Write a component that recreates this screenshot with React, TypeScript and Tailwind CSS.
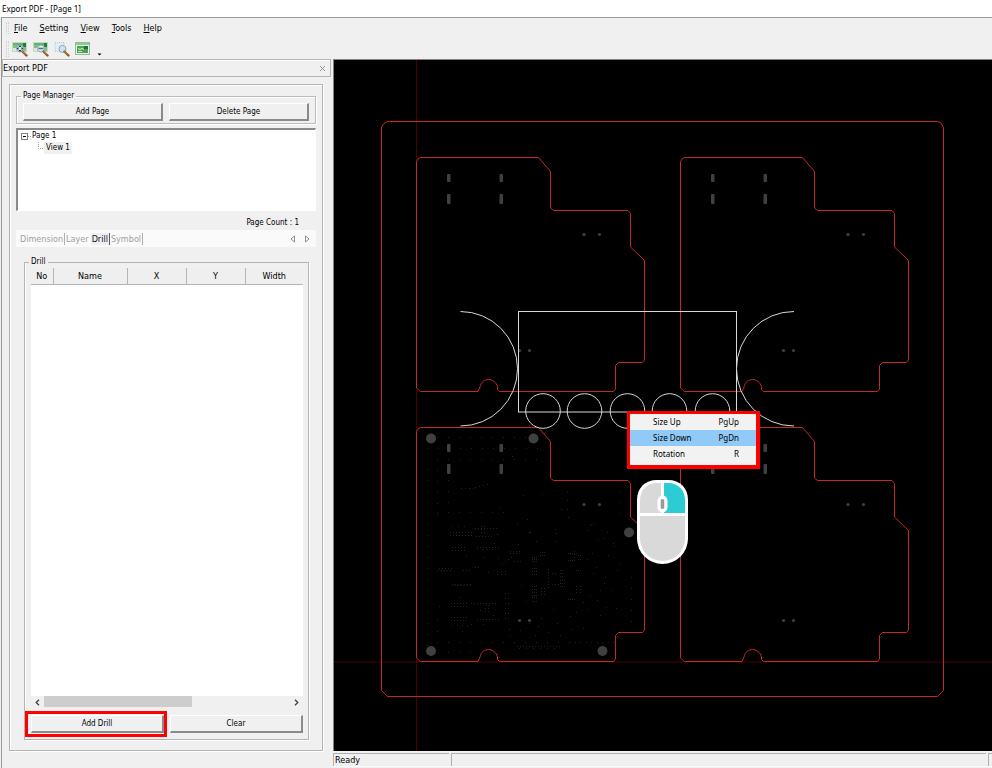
import { useState } from 'react';
import type { ReactNode } from 'react';
import clsx from 'clsx';

const MENUS = ['File', 'Setting', 'View', 'Tools', 'Help'];

const TABS = ['Dimension', 'Layer', 'Drill', 'Symbol'];

const COLUMNS = [
  { label: 'No', width: 'w-[22px]' },
  { label: 'Name', width: 'w-[74px]' },
  { label: 'X', width: 'w-[59px]' },
  { label: 'Y', width: 'w-[59px]' },
  { label: 'Width', width: 'w-[58px]' },
];

const CONTEXT_ITEMS = [
  { label: 'Size Up', shortcut: 'PgUp' },
  { label: 'Size Down', shortcut: 'PgDn', active: true },
  { label: 'Rotation', shortcut: 'R' },
];

/* Board copies, as offsets from the first one */
const BOARDS = [
  [0, 0],
  [264, 0],
  [0, 270],
  [264, 270],
];

const OUTLINE =
  'M416.5 161.5L418 159L420.5 157.5H538.5L550.5 171.5V208L553.5 210.5H628L630.5 213.5V247L644.5 260.5V360L642.5 362.5H618.5L615.5 365.5V389L613.5 391.5H499.5L497.5 389.5V387C495 377 482 377 480 387L478 391.5H420.5L416.5 388Z';

const HOLES = [
  [431, 438.5],
  [533.5, 438.5],
  [629, 532.5],
  [431, 651],
  [602.5, 651],
];

/* Via groups: x, y, columns, rows, column step, row step */
const VIAS = [
  [437, 437, 9, 1, 11, 0],
  [427, 448, 11, 1, 11, 0],
  [437, 459, 10, 1, 11, 0],
  [427, 469, 1, 17, 0, 11],
  [448, 480, 1, 3, 0, 11],
  [437, 470, 1, 5, 0, 11],
  [437, 512, 7, 1, 11, 0],
  [437, 642, 17, 1, 11, 0],
  [437, 620, 1, 2, 0, 11],
  [448, 652, 3, 1, 11, 0],
  [631, 577, 1, 5, 0, 11],
  [620, 491, 1, 3, 0, 11],
  [567, 491, 1, 3, 0, 9],
  [575, 642, 4, 1, 11, 0],
  [461, 488, 4, 1, 4, 0],
  [475, 487, 4, 1, 4, -1],
  [452, 526, 3, 1, 6, 0],
  [450, 532, 8, 2, 3, 3],
  [475, 528, 8, 1, 3, 0],
  [476, 536, 6, 1, 3, 0],
  [481, 526, 2, 3, 3, 3],
  [452, 547, 5, 2, 3, 3],
  [477, 547, 8, 1, 3, 0],
  [477, 549, 4, 1, 5, 0],
  [439, 568, 5, 1, 3, 0],
  [438, 570, 5, 1, 3, 0],
  [463, 570, 3, 1, 3, 0],
  [475, 567, 2, 1, 3, 0],
  [452, 584, 7, 1, 3, 0],
  [454, 585, 6, 1, 3, 0],
  [451, 603, 6, 2, 3, 3],
  [471, 603, 9, 1, 3, 0],
  [485, 605, 2, 3, 3, 3],
  [451, 617, 6, 2, 3, 3],
  [477, 619, 8, 1, 3, 0],
  [471, 624, 2, 1, 12, 0],
  [452, 625, 4, 1, 5, 0],
  [505, 593, 2, 6, 3, 5],
  [497, 571, 3, 2, 4, 3],
  [502, 563, 4, 1, 3, -2],
  [510, 551, 4, 2, 3, 2],
  [514, 561, 3, 1, 3, 0],
  [532, 557, 3, 3, 2, 2],
  [532, 568, 3, 3, 2, 3],
  [532, 586, 3, 4, 2, 3],
  [532, 597, 3, 2, 2, 4],
  [540, 552, 3, 2, 2, 3],
  [541, 588, 2, 3, 3, 3],
  [548, 569, 1, 7, 0, 3],
  [552, 573, 2, 1, 3, 0],
  [560, 570, 2, 3, 2, 3],
  [560, 580, 3, 3, 2, 3],
  [552, 584, 3, 1, 3, 0],
  [568, 553, 5, 1, 2, 0],
  [568, 560, 3, 1, 2, 0],
  [574, 551, 1, 4, 0, 3],
  [578, 555, 2, 2, 2, 4],
  [576, 570, 3, 1, 2, 0],
  [576, 586, 2, 3, 4, 3],
  [568, 599, 4, 1, 2, 0],
  [517, 646, 15, 1, 3, 0],
  [519, 648, 6, 1, 7, 0],
];

const LOOSE_VIAS = [
  [527, 519], [529, 532], [530, 532], [536, 541], [542, 494], [540, 449], [545, 438], [523, 495],
  [512, 456], [561, 509], [568, 517], [555, 529], [556, 533], [556, 541], [590, 525], [591, 524],
  [588, 530], [593, 523], [598, 539], [607, 532], [608, 555], [604, 538], [614, 546], [592, 553],
  [587, 559], [596, 567], [593, 573], [605, 577], [604, 583], [600, 590], [611, 590], [613, 543],
  [583, 602], [587, 609], [597, 600], [606, 607], [576, 612], [570, 616], [557, 623], [541, 618],
  [538, 626], [553, 609], [529, 623], [520, 630], [535, 635], [548, 632], [560, 635], [571, 629],
  [583, 628], [509, 629], [510, 636], [498, 558], [494, 543], [497, 534], [484, 557], [488, 572],
  [466, 555], [459, 597], [439, 606], [462, 631], [480, 610], [493, 615], [620, 563], [617, 570],
  [616, 608], [600, 615], [590, 595], [521, 585], [518, 544], [517, 524], [500, 508], [526, 601],
];

function spread([x, y, cols, rows, dx, dy]: number[]) {
  const points: number[][] = [];
  for (let c = 0; c < cols; c++) {
    for (let r = 0; r < rows; r++) {
      points.push([x + c * dx, rows === 1 ? y + c * dy : y + r * dy]);
    }
  }
  return points;
}

const VIA_PATH = [...VIAS.flatMap(spread), ...LOOSE_VIAS].map(([x, y]) => `M${x} ${y}h1v1h-1z`).join('');

function BoardIcon({ children }: { children?: ReactNode }) {
  return (
    <>
      <rect x="0.5" y="1.5" width="14" height="9" fill="#7cc47e" stroke="#c9d6c9" />
      <path d="M1 2h13v2H1z" fill="#5fb865" />
      <path d="M11 2h3v4h-3z" fill="#17803a" />
      <path d="M1 7h4v3H1z" fill="#d7ecd5" />
      {children}
    </>
  );
}

function Handle() {
  return (
    <>
      <path d="M10.5 10.5l4 4" stroke="#8a5527" strokeWidth="2.4" strokeLinecap="round" />
      <path d="M10.5 10l3.5 3.5" stroke="#d39b62" strokeWidth="1" />
    </>
  );
}

const TOOLBAR = [
  {
    label: 'Zoom in',
    icon: (
      <BoardIcon>
        <circle cx="8" cy="7.5" r="3.5" fill="#d9e8f2" stroke="#8fa6b8" />
        <path d="M8 4l1.500 2h-3zM8 11l1.500-2h-3zM4.500 7.500l2-1.500v3zM11.500 7.500l-2-1.500v3z" fill="#26384c" />
        <Handle />
      </BoardIcon>
    ),
  },
  {
    label: 'Zoom out',
    icon: (
      <BoardIcon>
        <circle cx="8" cy="7.5" r="3.5" fill="#e3edf5" stroke="#8fa6b8" />
        <path d="M5.500 7.500h5" stroke="#4d6f8c" strokeWidth="1.6" />
        <Handle />
      </BoardIcon>
    ),
  },
  {
    label: 'Zoom window',
    icon: (
      <>
        <rect x="1" y="1.5" width="9" height="9" fill="#e3edf5" stroke="#b4c5d4" strokeDasharray="1 1" />
        <circle cx="8.5" cy="8" r="3.5" fill="#cfe3f1" stroke="#8aa7c0" />
        <Handle />
      </>
    ),
  },
  {
    label: 'Fit board',
    icon: (
      <>
        <rect x="0.5" y="1.5" width="14" height="12" fill="#e8f0e8" stroke="#9db59d" />
        <path d="M1 2h13v2H1z" fill="#8bcf8c" />
        <rect x="2" y="5" width="11" height="7" fill="#45a84f" />
        <path d="M9 5h4v3H9z" fill="#13753a" />
        <path d="M3 7.500l2 1 2-1 2 1" fill="none" stroke="#e4f5e0" />
        <path d="M3 10.500h4" stroke="#bfe6b9" />
        <path d="M9 8.500l2 2" stroke="#d8583a" />
      </>
    ),
  },
];

function Grip({ className }: { className?: string }) {
  return <span className={clsx('w-[3px] border-x border-dotted border-[#d0d0d0]', className)} />;
}

function PushButton({ children }: { children: ReactNode }) {
  return (
    <button
      type="button"
      className="h-[18px] w-full border-r-2 border-b-2 border-t border-l border-t-white border-l-white border-r-[#8a8a8a] border-b-[#8a8a8a] bg-[#f0f0f0] leading-3"
    >
      {children}
    </button>
  );
}

function PageManager() {
  return (
    <fieldset className="border border-[#bcbcbc] px-[6px] pt-px pb-0.5 shadow-[inset_1px_1px_0_#fff,1px_1px_0_#fff]">
      <legend className="-ml-0.5 px-0.5 leading-3">Page Manager</legend>
      <div className="flex gap-[6px]">
        <PushButton>Add Page</PushButton>
        <PushButton>Delete Page</PushButton>
      </div>
    </fieldset>
  );
}

function PageTree() {
  return (
    <ul className="mt-1 h-[83px] border-t-2 border-l-2 border-r border-b border-t-[#8a8a8a] border-l-[#8a8a8a] border-r-white border-b-white bg-white pl-[3px]">
      <li>
        <div className="flex h-3 items-center">
          <svg className="h-[7px] w-[11px]" viewBox="0 0 11 7">
            <rect x="0.5" y="0.5" width="6" height="6" fill="#fff" stroke="#808080" />
            <path d="M2 3.500h3" stroke="#000" />
            <path d="M7 3.500h4" stroke="#a0a0a0" strokeDasharray="1 1" />
          </svg>
          <span>Page 1</span>
        </div>
        <ul>
          <li className="flex h-3 items-start pl-[17px]">
            <svg className="h-3 w-[6px]" viewBox="0 0 6 12">
              <path d="M0.500 0v6.500h6" fill="none" stroke="#a0a0a0" strokeDasharray="1 1" />
            </svg>
            <span className="bg-[#f0f0f0] px-0.5 leading-3">View 1</span>
          </li>
        </ul>
      </li>
    </ul>
  );
}

function TabStrip() {
  const [tab, setTab] = useState('Drill');
  return (
    <div className="mt-px flex h-[17px] items-center bg-[#fafafa] text-[9px]">
      <div role="tablist" className="flex h-3">
        {TABS.map((name) => (
          <button
            key={name}
            type="button"
            role="tab"
            aria-selected={name === tab}
            onClick={() => setTab(name)}
            className={clsx(
              'border-r px-px leading-3',
              name === 'Dimension' && 'ml-[3px]',
              name === 'Layer' && 'border-transparent',
              name === 'Drill' ? 'border-[#606060]' : name !== 'Layer' && 'border-[#b0b0b0]',
              name === tab ? 'bg-[#efefef] text-[#101030]' : 'text-[#a0a0a0]'
            )}
          >
            {name}
          </button>
        ))}
      </div>
      <div className="ml-auto flex gap-[10px] pr-[6px]">
        <button type="button" aria-label="Previous tab">
          <svg className="h-2 w-[5px]" viewBox="0 0 5 8">
            <path d="M4.500 1v6L1 4z" fill="#fff" stroke="#707070" strokeWidth="0.8" />
          </svg>
        </button>
        <button type="button" aria-label="Next tab">
          <svg className="h-2 w-[5px]" viewBox="0 0 5 8">
            <path d="M0.500 1v6L4 4z" fill="#fff" stroke="#707070" strokeWidth="0.8" />
          </svg>
        </button>
      </div>
    </div>
  );
}

function DrillGroup() {
  return (
    <fieldset className="mx-2 mt-[9px] mb-[10px] flex min-h-0 flex-1 flex-col border border-[#b4b4b4] pr-[5px] pb-[6px] pl-[6px] shadow-[inset_1px_0_0_#fff,1px_1px_0_#fff]">
      <legend className="-ml-0.5 px-0.5 leading-3">Drill</legend>
      <div className="min-h-0 flex-1 bg-white">
        <table className="w-full table-fixed border-collapse text-[9px]">
          <thead>
            <tr className="h-4 bg-[#efefef]">
              {COLUMNS.map((col) => (
                <th key={col.label} className={clsx('border-r border-b border-[#b4b4b4] p-0 text-center leading-3 font-normal last:border-r-0', col.width)}>
                  {col.label}
                </th>
              ))}
            </tr>
          </thead>
          <tbody />
        </table>
      </div>
      <div className="flex h-3 items-stretch bg-[#f0f0f0]">
        <button type="button" aria-label="Scroll left" className="flex w-[13px] items-center justify-center">
          <svg className="h-[7px] w-[5px]" viewBox="0 0 5 7">
            <path d="M4 0.800L1.200 3.500 4 6.200" fill="none" stroke="#404040" strokeWidth="1.3" />
          </svg>
        </button>
        <div className="flex-1">
          <div className="h-[11px] w-3/5 bg-[#cdcdcd]" />
        </div>
        <button type="button" aria-label="Scroll right" className="flex w-[13px] items-center justify-center">
          <svg className="h-[7px] w-[5px]" viewBox="0 0 5 7">
            <path d="M1 0.800L3.800 3.500 1 6.200" fill="none" stroke="#404040" strokeWidth="1.3" />
          </svg>
        </button>
      </div>
      <div className="mt-[7px] flex gap-[6px]">
        <div className="relative flex-1">
          <PushButton>Add Drill</PushButton>
          <span className="pointer-events-none absolute -inset-y-1 -right-[3px] -left-[6px] border-[3px] border-[#ff0000]" />
        </div>
        <div className="flex-1">
          <PushButton>Clear</PushButton>
        </div>
      </div>
    </fieldset>
  );
}

function ExportPanel() {
  return (
    <aside className="flex w-[331px] shrink-0 flex-col pb-4 text-[8px]">
      <div className="mr-0.5 flex h-[18px] shrink-0 items-center justify-between border border-[#b4b4b4] pr-1 text-[9px] shadow-[inset_1px_1px_0_#fff]">
        <h2 className="leading-3">Export PDF</h2>
        <button type="button" aria-label="Close">
          <svg className="h-[7px] w-[7px]" viewBox="0 0 7 7">
            <path d="M1 1l5 5M6 1L1 6" stroke="#8a8a8a" strokeWidth="0.9" />
          </svg>
        </button>
      </div>
      <div className="mt-[7px] mr-[10px] ml-[7px] flex min-h-0 flex-1 flex-col border border-[#b4b4b4] px-[6px] pt-[5px] shadow-[inset_1px_1px_0_#fff,1px_1px_0_#fff]">
        <PageManager />
        <PageTree />
        <p className="mt-[6px] pr-[17px] text-right leading-3">Page Count : 1</p>
        <TabStrip />
        <DrillGroup />
      </div>
    </aside>
  );
}

function BoardDrawing() {
  return (
    <svg className="absolute inset-0 h-full w-full">
      <g transform="translate(-334 -60)" fill="none" strokeWidth="1">
        <path d="M416.500 60V2000M334 662H2000" stroke="#4a0000" />
        <path d="M387.500 121.500H937.500L941 123L943.500 127.500V690.500L937.500 696.500H387.500L381.500 690.500V127L384 123.500Z" stroke="#c62828" />
        <path d={VIA_PATH} fill="#222" />
        {HOLES.map(([x, y]) => (
          <circle key={`${x}-${y}`} cx={x} cy={y} r="5" fill="#404040" />
        ))}
        {BOARDS.map(([dx, dy]) => (
          <g key={`${dx}-${dy}`} transform={`translate(${dx} ${dy})`}>
            <path d={OUTLINE} stroke="#c62828" />
            <g fill="#404040">
              <rect x="447" y="174" width="3.500" height="8" rx="1" />
              <rect x="499.500" y="174" width="3.500" height="8" rx="1" />
              <rect x="447" y="194" width="3.500" height="10" rx="1" />
              <rect x="499.500" y="194" width="3.500" height="10" rx="1" />
              <circle cx="584" cy="234.500" r="1.600" />
              <circle cx="599.500" cy="234.500" r="1.600" />
              <circle cx="519.500" cy="350.500" r="1.600" />
              <circle cx="529.500" cy="350.500" r="1.600" />
            </g>
          </g>
        ))}
        <g stroke="#d8d8d8">
          <rect x="518.500" y="311.500" width="218" height="100.500" />
          <path d="M460.500 311.500A57 57.250 0 0 1 460.500 426M794 311.500A57.500 57.250 0 0 0 794 426" />
          {[543, 584.5, 627.5, 669.5, 712.5].map((cx) => (
            <circle key={cx} cx={cx} cy="411" r="17.300" />
          ))}
        </g>
      </g>
    </svg>
  );
}

function ContextMenu() {
  return (
    <div className="absolute top-[351px] left-[293px] w-[133px] border-4 border-t-[3px] border-l-[3px] border-[#ff0000] bg-[#f2f2f2] pb-[3px] font-['Noto_Sans',sans-serif] text-[8px]">
      <ul role="menu">
        {CONTEXT_ITEMS.map((item) => (
          <li key={item.label} role="none">
            <button
              type="button"
              role="menuitem"
              className={clsx('flex h-4 w-full items-center justify-between pr-[17px] pl-[23px] leading-4', item.active && 'bg-[#91c9f7]')}
            >
              <span>{item.label}</span>
              <span>{item.shortcut}</span>
            </button>
          </li>
        ))}
      </ul>
    </div>
  );
}

function MouseHint() {
  return (
    <svg className="absolute top-[420px] left-[303px] h-[84px] w-[51px]" viewBox="0 0 51 84">
      <path d="M0 20C0 8 8 0 20 0H31C43 0 51 8 51 20V58.500A25.500 25.500 0 0 1 0 58.500Z" fill="#fff" />
      <path d="M3 20.500C3 10 10 3 20 3H24V33H3Z" fill="#d9d9d9" />
      <path d="M27 3H31C41 3 48 10 48 20.500V33H27Z" fill="#2bccd3" />
      <path d="M3 36H48V58.500A22.500 22.500 0 0 1 3 58.500Z" fill="#d9d9d9" />
      <rect x="20.500" y="15.500" width="10" height="17" rx="5" fill="#fff" />
      <rect x="23.700" y="19" width="3.600" height="10" rx="1.800" fill="#999" />
    </svg>
  );
}

export default function App() {
  return (
    <div className="flex h-screen flex-col bg-[#f0f0f0] font-['DejaVu_Sans_Condensed','DejaVu_Sans',sans-serif] text-black">
      <header className="bg-white pl-0.5 font-['Noto_Sans',sans-serif] text-[8px]">
        <h1 className="leading-[17px]">Export PDF - [Page 1]</h1>
      </header>
      <div className="ml-px flex min-h-0 flex-1 flex-col border-t border-l border-[#9a9a9a] pb-px">
        <nav className="flex h-5 shrink-0 items-center pl-1 text-[9px]">
          <Grip className="mr-[5px] h-3" />
          <div className="flex gap-3">
            {MENUS.map((menu) => (
              <button key={menu} type="button" className="leading-3">
                <span className="underline">{menu[0]}</span>
                {menu.slice(1)}
              </button>
            ))}
          </div>
        </nav>
        <div className="flex h-[21px] shrink-0 items-center pl-1">
          <Grip className="mr-[3px] h-4" />
          <div className="flex gap-[5px]">
            {TOOLBAR.map((tool) => (
              <button key={tool.label} type="button" aria-label={tool.label}>
                <svg className="h-4 w-4" viewBox="0 0 16 16">
                  {tool.icon}
                </svg>
              </button>
            ))}
          </div>
          <button type="button" aria-label="Toolbar options" className="ml-[6px] self-end pb-[3px]">
            <svg className="h-[3px] w-[5px]" viewBox="0 0 5 3">
              <path d="M0.500 0.500h4L2.500 2.500z" fill="#000" />
            </svg>
          </button>
        </div>
        <div className="flex min-h-0 flex-1">
          <ExportPanel />
          <div className="flex min-w-0 flex-1 flex-col">
            <main className="relative min-h-0 flex-1 overflow-hidden border-t border-l border-[#808080] bg-black">
              <BoardDrawing />
              <ContextMenu />
              <MouseHint />
            </main>
            <footer className="mt-0.5 flex h-[14px] shrink-0 gap-0.5 border-b border-[#fafafa] text-[9px]">
              <p className="w-[116px] border-t border-l border-[#b0b0b0] pl-px leading-3">Ready</p>
              <p className="flex-1 border-t border-l border-[#b0b0b0]" />
              <p className="w-1 border-t border-l border-[#b0b0b0]" />
            </footer>
          </div>
        </div>
      </div>
    </div>
  );
}
